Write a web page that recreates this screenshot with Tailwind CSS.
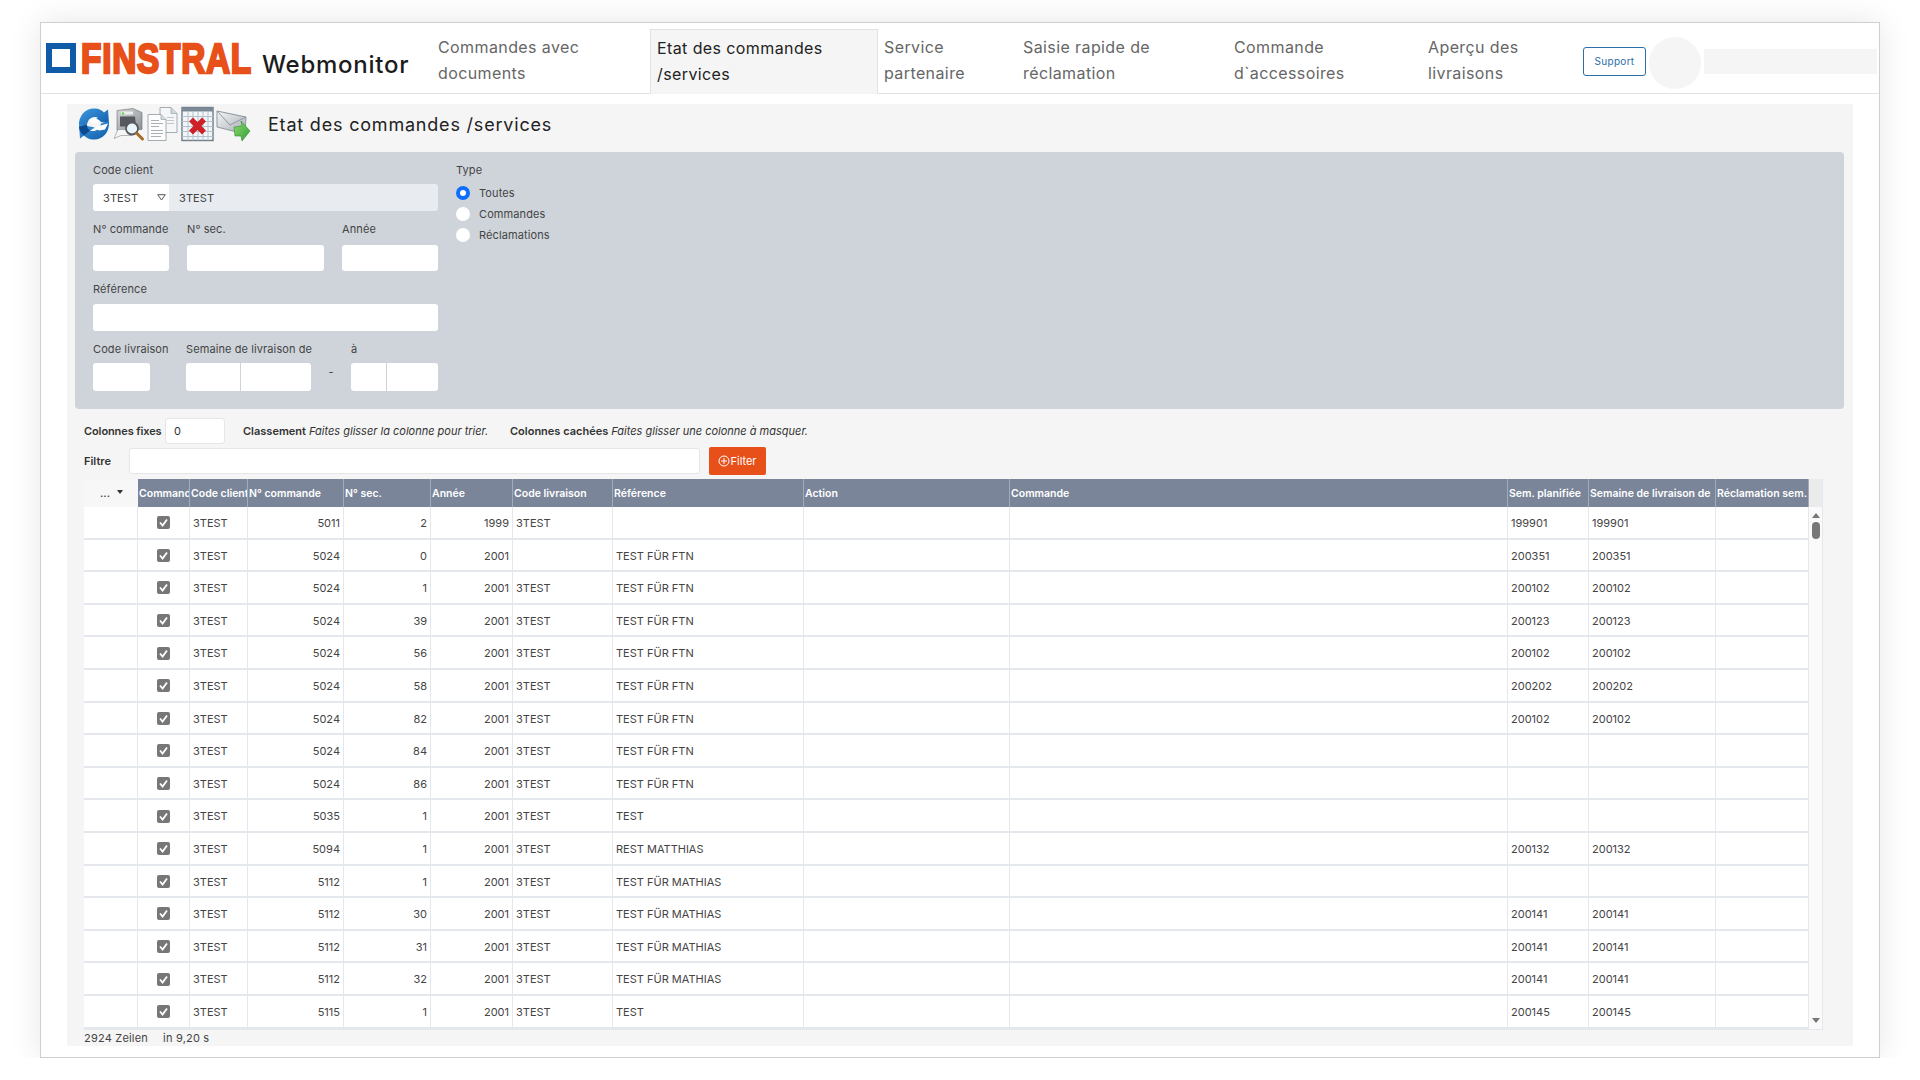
<!DOCTYPE html>
<html lang="fr"><head><meta charset="utf-8"><title>Finstral Webmonitor</title>
<script src="https://cdn.jsdelivr.net/npm/@tailwindcss/browser@4"></script></head>
<body class="bg-white font-['Inter',sans-serif] text-[11px] text-[#444] overflow-hidden">
<div class="pt-[22px] pl-[40px]">
<div class="w-[1840px] h-[1036px] bg-white border border-[#cfcfcf] shadow-[0_0_30px_rgba(0,0,0,0.1)]">
  <!-- nav -->
  <header class="h-[71px] border-b border-[#e2e2e2] flex relative">
    <div class="w-[397px] shrink-0 flex items-start pl-[5px] pt-[19px]">
      <span class="w-[30px] h-[30px] border-[6px] border-[#0f5ba7] shrink-0 mt-[1px]"></span>
      <span class="ml-[5px] w-[170px] h-[32px] overflow-visible shrink-0"><span class="block origin-top-left scale-x-[.775] font-['Liberation_Sans'] font-bold text-[43px] leading-[32px] text-[#e8501a] [-webkit-text-stroke:2.5px_#e8501a] tracking-[1px] whitespace-nowrap">FINSTRAL</span></span>
      <span class="ml-[11px] text-[24px] leading-[30px] font-medium text-[#1c1c1c] mt-[8px] tracking-[.75px]">Webmonitor</span>
    </div>
    <nav class="flex text-[16px] leading-[26px] text-[#666] tracking-[.4px] pt-[11px]">
      <a class="w-[212px]">Commandes avec<br>documents</a>
      <a class="w-[228px] -mt-[5px] h-[65px] pt-[5px] pl-[6px] bg-[#f5f5f5] border border-b-0 border-[#e2e2e2] text-[#222]">Etat des commandes<br>/services</a>
      <a class="w-[145px] pl-[6px]">Service<br>partenaire</a>
      <a class="w-[210px]">Saisie rapide de<br>réclamation</a>
      <a class="w-[195px] pl-[1px]">Commande<br>d`accessoires</a>
      <a class="w-[155px]">Aperçu des<br>livraisons</a>
    </nav>
    <button class="absolute left-[1542px] top-[24px] w-[63px] h-[29px] border border-[#2a6fa8] rounded-[3px] text-[10px] tracking-[.3px] text-[#2a6fa8]">Support</button>
    <span class="absolute left-[1608px] top-[14px] w-[52px] h-[52px] rounded-full bg-[#f5f5f5]"></span>
    <span class="absolute left-[1663px] top-[26px] w-[173px] h-[25px] bg-[#f5f5f5]"></span>
  </header>
  <!-- main -->
  <main class="ml-[26px] mt-[10px] w-[1786px] h-[942px] bg-[#f5f5f5]">
    <div class="h-[48px] flex items-start pl-[11px] pt-[2px]">
      <div class="flex w-[173px] h-[36px] items-center gap-[2px]">
        <svg width="32" height="36" viewBox="0 0 32 35" class="shrink-0"><defs><linearGradient id="b" x1="0" y1="0" x2="1" y2="1"><stop offset="0" stop-color="#3f9be0"/><stop offset="1" stop-color="#0f5aa8"/></linearGradient></defs><path d="M1 20C0 8 9 1 17 2c4 0 7 2 9 4l4-3 1 14-16-3 5-3c-5-2-10 1-11 7z" fill="url(#b)"/><path d="M31 15c1 12-8 19-16 18-4 0-7-2-9-4l-4 3-1-14 16 3-5 3c5 2 10-1 11-7z" fill="url(#b)"/><path d="M1 20l8-2c0 3 1 5 3 6l-6 5c-3-2-5-5-5-9z" fill="#0c4a90"/><path d="M11 13l6-2 6 4-8 2z" fill="#fff"/><path d="M16 21l10-3 4-1-3 6-6 1z" fill="#fff"/></svg>
        <svg width="33" height="36" viewBox="0 0 33 35" class="shrink-0"><defs><linearGradient id="p" x1="0" y1="0" x2="1" y2="1"><stop offset="0" stop-color="#d6d8da"/><stop offset="1" stop-color="#8b8f94"/></linearGradient></defs><path d="M5 4l16-2 9 4v17l-25 1z" fill="url(#p)" stroke="#6a6d71" stroke-width=".6"/><path d="M8 10h15l1 10H8z" fill="#55585d"/><path d="M9 5h12v3H9z" fill="#eceeef"/><circle cx="11" cy="7" r="1.2" fill="#63d14a"/><path d="M6 23h13l1 6H9l-7 3z" fill="#f6f6f6" stroke="#8a8a8a" stroke-width=".6"/><circle cx="20" cy="22" r="6" fill="#eaf5fb" stroke="#55585c" stroke-width="1.8"/><path d="M24.500 26.500l6 6" stroke="#a86a22" stroke-width="3" stroke-linecap="round"/></svg>
        <svg width="32" height="36" viewBox="0 0 32 35" class="shrink-0"><path d="M13 1h11l6 6v19H13z" fill="#f4f6f7" stroke="#8d9aa2" stroke-width=".8"/><path d="M24 1v6h6" fill="#cfd6da" stroke="#8d9aa2" stroke-width=".6"/><path d="M20 11h7M20 14h7M20 17h7" stroke="#c0c6cb"/><path d="M1 8h13l5 5v21H1z" fill="#fcfcfc" stroke="#8d9aa2" stroke-width=".8"/><path d="M14 8v5h5" fill="#d7dcdf" stroke="#8d9aa2" stroke-width=".6"/><path d="M4 14h8M4 17h12M4 20h8M4 24h12M4 27h12M4 30h10" stroke="#a9b0b5"/></svg>
        <svg width="33" height="36" viewBox="0 0 33 35" class="shrink-0"><rect x="1" y="1" width="31" height="33" fill="#f2f6f8" stroke="#6f7c88" stroke-width="1.4"/><rect x="1" y="1" width="31" height="4" fill="#7b8996"/><path d="M7 5v29M12 5v29M17 5v29M22 5v29M27 5v29M1 10h31M1 15h31M1 20h31M1 25h31M1 30h31" stroke="#b3c2cc" stroke-width="1"/><path d="M10 13l13 13M23 13L10 26" stroke="#cf2028" stroke-width="5.500"/></svg>
        <svg width="35" height="36" viewBox="0 0 35 36" class="shrink-0"><defs><linearGradient id="e" x1="0" y1="0" x2="1" y2="1"><stop offset="0" stop-color="#f4f5f6"/><stop offset="1" stop-color="#a6acb2"/></linearGradient><linearGradient id="g" x1="0" y1="0" x2="1" y2="1"><stop offset="0" stop-color="#8fdc6a"/><stop offset="1" stop-color="#2f9e3a"/></linearGradient></defs><path d="M1 5l29 6-1 17-28-7z" fill="url(#e)" stroke="#8f979e"/><path d="M1 5l13 14 16-8" fill="none" stroke="#8f979e"/><path d="M18 21l8-1-1-5 9 10-8 10-1-5-6 0z" fill="url(#g)" stroke="#2f8a30" stroke-width=".6"/></svg>
      </div>
      <h1 class="ml-[17px] text-[18px] leading-[38px] font-normal text-[#222] tracking-[.8px]">Etat des commandes /services</h1>
    </div>
    <!-- filter panel -->
    <section class="ml-[8px] w-[1769px] h-[257px] bg-[#cfd4db] rounded-[4px] flex pl-[18px] pt-[11px] text-[#444] tracking-[.1px]">
      <div class="w-[345px] shrink-0">
        <label class="block h-[14px] leading-[14px]">Code client</label>
        <div class="mt-[7px] h-[27px] flex rounded-[3px] overflow-hidden leading-[28px]">
          <div class="w-[76px] bg-white pl-[10px] relative">3TEST<svg class="absolute right-[3px] top-[10px]" width="9" height="7" viewBox="0 0 9 7"><path d="M.7.7h7.6L4.5 6z" fill="none" stroke="#555"/></svg></div>
          <div class="flex-1 bg-[#e8ebef] pl-[10px]">3TEST</div>
        </div>
        <div class="mt-[11px] flex leading-[14px] h-[14px]"><label class="w-[94px]">N° commande</label><label class="w-[155px]">N° sec.</label><label>Année</label></div>
        <div class="mt-[9px] flex h-[26px]"><span class="w-[76px] bg-white rounded-[3px]"></span><span class="ml-[18px] w-[137px] bg-white rounded-[3px]"></span><span class="ml-[18px] w-[96px] bg-white rounded-[3px]"></span></div>
        <label class="block mt-[11px] h-[14px] leading-[14px]">Référence</label>
        <div class="mt-[8px] h-[27px] bg-white rounded-[3px]"></div>
        <div class="mt-[11px] flex leading-[14px] h-[14px]"><label class="w-[93px]">Code livraison</label><label class="w-[165px]">Semaine de livraison de</label><label>à</label></div>
        <div class="mt-[7px] flex h-[28px]">
          <span class="w-[57px] bg-white rounded-[3px]"></span>
          <span class="ml-[36px] w-[125px] bg-white rounded-[3px] flex"><span class="w-[55px] border-r border-[#cfd4db]"></span></span>
          <span class="w-[40px] text-center leading-[18px]">-</span>
          <span class="w-[87px] bg-white rounded-[3px] flex"><span class="w-[36px] border-r border-[#cfd4db]"></span></span>
        </div>
      </div>
      <div class="ml-[18px]">
        <label class="block h-[14px] leading-[14px]">Type</label>
        <div class="mt-[9px] flex flex-col gap-[7px] leading-[14px]">
          <div class="flex items-center gap-[9px]"><span class="w-[14px] h-[14px] rounded-full bg-white border-[4px] border-[#0d6efd]"></span>Toutes</div>
          <div class="flex items-center gap-[9px]"><span class="w-[14px] h-[14px] rounded-full bg-white"></span>Commandes</div>
          <div class="flex items-center gap-[9px]"><span class="w-[14px] h-[14px] rounded-full bg-white"></span>Réclamations</div>
        </div>
      </div>
    </section>
    <!-- options -->
    <div class="ml-[17px] mt-[9px] h-[26px] flex items-center text-[11px] text-[#333]">
      <b class="font-semibold w-[81px] tracking-[-.1px] whitespace-nowrap">Colonnes fixes</b>
      <span class="w-[60px] h-[26px] bg-white border border-[#e6e6e6] rounded-[3px] pl-[8px] leading-[24px]">0</span>
      <span class="ml-[18px] w-[267px] whitespace-nowrap"><b class="font-semibold">Classement</b> <i>Faites glisser la colonne pour trier.</i></span>
      <span class="whitespace-nowrap"><b class="font-semibold">Colonnes cachées</b> <i>Faites glisser une colonne à masquer.</i></span>
    </div>
    <div class="ml-[17px] mt-[3px] h-[28px] flex items-center text-[11px] text-[#333]">
      <b class="font-semibold w-[45px]">Filtre</b>
      <span class="w-[571px] h-[26px] bg-white border border-[#e6e6e6] rounded-[3px]"></span>
      <button class="ml-[9px] w-[57px] h-[28px] rounded-[2px] bg-[#e8501a] text-white text-[11px] flex items-center justify-center"><svg width="12" height="12" viewBox="0 0 12 12" class="shrink-0"><circle cx="6" cy="6" r="5" fill="none" stroke="#fff"/><path d="M6 3v6M3 6h6" stroke="#fff"/></svg>Filter</button>
    </div>
    <!-- table -->
    <div class="ml-[17px] mt-[3px] w-[1739px] flex border-b border-[#e4e7ec]">
      <div class="w-[1725px] shrink-0 [&>div>div]:px-[3px] [&>div>div]:overflow-hidden [&>div>div]:whitespace-nowrap">
        <div class="grid grid-cols-[54px_52px_58px_96px_87px_82px_100px_191px_206px_498px_81px_127px_93px] h-[28px] mt-[1px] leading-[30px] bg-[#7a8599] text-white font-semibold text-[10.5px] [&>div]:border-r [&>div]:border-[#a3abb8] [&>div]:!px-[1px]">
          <div class="bg-[#f7f7f7] text-[#444] !border-r-0 relative"><span class="ml-[15px]">...</span><span class="absolute left-[33px] top-[11px] border-x-[3px] border-t-[4px] border-x-transparent border-t-[#333]"></span></div>
          <div>Commande</div><div>Code client</div><div>N° commande</div><div>N° sec.</div><div>Année</div><div>Code livraison</div><div>Référence</div><div>Action</div><div>Commande</div><div>Sem. planifiée</div><div>Semaine de livraison de</div><div>Réclamation sem.</div>
        </div>
        <div class="grid grid-cols-[54px_52px_58px_96px_87px_82px_100px_191px_206px_498px_81px_127px_93px] h-[32.6px] leading-[33px] bg-white border-b-2 border-[#e4e7ec] [&>div]:border-r [&>div]:border-[#e4e7ec]"><div></div><div class="flex items-center justify-center pt-[1px]"><svg width="13" height="13" viewBox="0 0 13 13"><rect width="13" height="13" rx="2" fill="#777"/><path d="M3 6.500l2.600 3L10 3.500" fill="none" stroke="#fff" stroke-width="1.800"/></svg></div><div>3TEST</div><div class="text-right">5011</div><div class="text-right">2</div><div class="text-right">1999</div><div>3TEST</div><div></div><div></div><div></div><div>199901</div><div>199901</div><div></div></div>
        <div class="grid grid-cols-[54px_52px_58px_96px_87px_82px_100px_191px_206px_498px_81px_127px_93px] h-[32.6px] leading-[33px] bg-white border-b-2 border-[#e4e7ec] [&>div]:border-r [&>div]:border-[#e4e7ec]"><div></div><div class="flex items-center justify-center pt-[1px]"><svg width="13" height="13" viewBox="0 0 13 13"><rect width="13" height="13" rx="2" fill="#777"/><path d="M3 6.500l2.600 3L10 3.500" fill="none" stroke="#fff" stroke-width="1.800"/></svg></div><div>3TEST</div><div class="text-right">5024</div><div class="text-right">0</div><div class="text-right">2001</div><div></div><div>TEST FÜR FTN</div><div></div><div></div><div>200351</div><div>200351</div><div></div></div>
        <div class="grid grid-cols-[54px_52px_58px_96px_87px_82px_100px_191px_206px_498px_81px_127px_93px] h-[32.6px] leading-[33px] bg-white border-b-2 border-[#e4e7ec] [&>div]:border-r [&>div]:border-[#e4e7ec]"><div></div><div class="flex items-center justify-center pt-[1px]"><svg width="13" height="13" viewBox="0 0 13 13"><rect width="13" height="13" rx="2" fill="#777"/><path d="M3 6.500l2.600 3L10 3.500" fill="none" stroke="#fff" stroke-width="1.800"/></svg></div><div>3TEST</div><div class="text-right">5024</div><div class="text-right">1</div><div class="text-right">2001</div><div>3TEST</div><div>TEST FÜR FTN</div><div></div><div></div><div>200102</div><div>200102</div><div></div></div>
        <div class="grid grid-cols-[54px_52px_58px_96px_87px_82px_100px_191px_206px_498px_81px_127px_93px] h-[32.6px] leading-[33px] bg-white border-b-2 border-[#e4e7ec] [&>div]:border-r [&>div]:border-[#e4e7ec]"><div></div><div class="flex items-center justify-center pt-[1px]"><svg width="13" height="13" viewBox="0 0 13 13"><rect width="13" height="13" rx="2" fill="#777"/><path d="M3 6.500l2.600 3L10 3.500" fill="none" stroke="#fff" stroke-width="1.800"/></svg></div><div>3TEST</div><div class="text-right">5024</div><div class="text-right">39</div><div class="text-right">2001</div><div>3TEST</div><div>TEST FÜR FTN</div><div></div><div></div><div>200123</div><div>200123</div><div></div></div>
        <div class="grid grid-cols-[54px_52px_58px_96px_87px_82px_100px_191px_206px_498px_81px_127px_93px] h-[32.6px] leading-[33px] bg-white border-b-2 border-[#e4e7ec] [&>div]:border-r [&>div]:border-[#e4e7ec]"><div></div><div class="flex items-center justify-center pt-[1px]"><svg width="13" height="13" viewBox="0 0 13 13"><rect width="13" height="13" rx="2" fill="#777"/><path d="M3 6.500l2.600 3L10 3.500" fill="none" stroke="#fff" stroke-width="1.800"/></svg></div><div>3TEST</div><div class="text-right">5024</div><div class="text-right">56</div><div class="text-right">2001</div><div>3TEST</div><div>TEST FÜR FTN</div><div></div><div></div><div>200102</div><div>200102</div><div></div></div>
        <div class="grid grid-cols-[54px_52px_58px_96px_87px_82px_100px_191px_206px_498px_81px_127px_93px] h-[32.6px] leading-[33px] bg-white border-b-2 border-[#e4e7ec] [&>div]:border-r [&>div]:border-[#e4e7ec]"><div></div><div class="flex items-center justify-center pt-[1px]"><svg width="13" height="13" viewBox="0 0 13 13"><rect width="13" height="13" rx="2" fill="#777"/><path d="M3 6.500l2.600 3L10 3.500" fill="none" stroke="#fff" stroke-width="1.800"/></svg></div><div>3TEST</div><div class="text-right">5024</div><div class="text-right">58</div><div class="text-right">2001</div><div>3TEST</div><div>TEST FÜR FTN</div><div></div><div></div><div>200202</div><div>200202</div><div></div></div>
        <div class="grid grid-cols-[54px_52px_58px_96px_87px_82px_100px_191px_206px_498px_81px_127px_93px] h-[32.6px] leading-[33px] bg-white border-b-2 border-[#e4e7ec] [&>div]:border-r [&>div]:border-[#e4e7ec]"><div></div><div class="flex items-center justify-center pt-[1px]"><svg width="13" height="13" viewBox="0 0 13 13"><rect width="13" height="13" rx="2" fill="#777"/><path d="M3 6.500l2.600 3L10 3.500" fill="none" stroke="#fff" stroke-width="1.800"/></svg></div><div>3TEST</div><div class="text-right">5024</div><div class="text-right">82</div><div class="text-right">2001</div><div>3TEST</div><div>TEST FÜR FTN</div><div></div><div></div><div>200102</div><div>200102</div><div></div></div>
        <div class="grid grid-cols-[54px_52px_58px_96px_87px_82px_100px_191px_206px_498px_81px_127px_93px] h-[32.6px] leading-[33px] bg-white border-b-2 border-[#e4e7ec] [&>div]:border-r [&>div]:border-[#e4e7ec]"><div></div><div class="flex items-center justify-center pt-[1px]"><svg width="13" height="13" viewBox="0 0 13 13"><rect width="13" height="13" rx="2" fill="#777"/><path d="M3 6.500l2.600 3L10 3.500" fill="none" stroke="#fff" stroke-width="1.800"/></svg></div><div>3TEST</div><div class="text-right">5024</div><div class="text-right">84</div><div class="text-right">2001</div><div>3TEST</div><div>TEST FÜR FTN</div><div></div><div></div><div></div><div></div><div></div></div>
        <div class="grid grid-cols-[54px_52px_58px_96px_87px_82px_100px_191px_206px_498px_81px_127px_93px] h-[32.6px] leading-[33px] bg-white border-b-2 border-[#e4e7ec] [&>div]:border-r [&>div]:border-[#e4e7ec]"><div></div><div class="flex items-center justify-center pt-[1px]"><svg width="13" height="13" viewBox="0 0 13 13"><rect width="13" height="13" rx="2" fill="#777"/><path d="M3 6.500l2.600 3L10 3.500" fill="none" stroke="#fff" stroke-width="1.800"/></svg></div><div>3TEST</div><div class="text-right">5024</div><div class="text-right">86</div><div class="text-right">2001</div><div>3TEST</div><div>TEST FÜR FTN</div><div></div><div></div><div></div><div></div><div></div></div>
        <div class="grid grid-cols-[54px_52px_58px_96px_87px_82px_100px_191px_206px_498px_81px_127px_93px] h-[32.6px] leading-[33px] bg-white border-b-2 border-[#e4e7ec] [&>div]:border-r [&>div]:border-[#e4e7ec]"><div></div><div class="flex items-center justify-center pt-[1px]"><svg width="13" height="13" viewBox="0 0 13 13"><rect width="13" height="13" rx="2" fill="#777"/><path d="M3 6.500l2.600 3L10 3.500" fill="none" stroke="#fff" stroke-width="1.800"/></svg></div><div>3TEST</div><div class="text-right">5035</div><div class="text-right">1</div><div class="text-right">2001</div><div>3TEST</div><div>TEST</div><div></div><div></div><div></div><div></div><div></div></div>
        <div class="grid grid-cols-[54px_52px_58px_96px_87px_82px_100px_191px_206px_498px_81px_127px_93px] h-[32.6px] leading-[33px] bg-white border-b-2 border-[#e4e7ec] [&>div]:border-r [&>div]:border-[#e4e7ec]"><div></div><div class="flex items-center justify-center pt-[1px]"><svg width="13" height="13" viewBox="0 0 13 13"><rect width="13" height="13" rx="2" fill="#777"/><path d="M3 6.500l2.600 3L10 3.500" fill="none" stroke="#fff" stroke-width="1.800"/></svg></div><div>3TEST</div><div class="text-right">5094</div><div class="text-right">1</div><div class="text-right">2001</div><div>3TEST</div><div>REST MATTHIAS</div><div></div><div></div><div>200132</div><div>200132</div><div></div></div>
        <div class="grid grid-cols-[54px_52px_58px_96px_87px_82px_100px_191px_206px_498px_81px_127px_93px] h-[32.6px] leading-[33px] bg-white border-b-2 border-[#e4e7ec] [&>div]:border-r [&>div]:border-[#e4e7ec]"><div></div><div class="flex items-center justify-center pt-[1px]"><svg width="13" height="13" viewBox="0 0 13 13"><rect width="13" height="13" rx="2" fill="#777"/><path d="M3 6.500l2.600 3L10 3.500" fill="none" stroke="#fff" stroke-width="1.800"/></svg></div><div>3TEST</div><div class="text-right">5112</div><div class="text-right">1</div><div class="text-right">2001</div><div>3TEST</div><div>TEST FÜR MATHIAS</div><div></div><div></div><div></div><div></div><div></div></div>
        <div class="grid grid-cols-[54px_52px_58px_96px_87px_82px_100px_191px_206px_498px_81px_127px_93px] h-[32.6px] leading-[33px] bg-white border-b-2 border-[#e4e7ec] [&>div]:border-r [&>div]:border-[#e4e7ec]"><div></div><div class="flex items-center justify-center pt-[1px]"><svg width="13" height="13" viewBox="0 0 13 13"><rect width="13" height="13" rx="2" fill="#777"/><path d="M3 6.500l2.600 3L10 3.500" fill="none" stroke="#fff" stroke-width="1.800"/></svg></div><div>3TEST</div><div class="text-right">5112</div><div class="text-right">30</div><div class="text-right">2001</div><div>3TEST</div><div>TEST FÜR MATHIAS</div><div></div><div></div><div>200141</div><div>200141</div><div></div></div>
        <div class="grid grid-cols-[54px_52px_58px_96px_87px_82px_100px_191px_206px_498px_81px_127px_93px] h-[32.6px] leading-[33px] bg-white border-b-2 border-[#e4e7ec] [&>div]:border-r [&>div]:border-[#e4e7ec]"><div></div><div class="flex items-center justify-center pt-[1px]"><svg width="13" height="13" viewBox="0 0 13 13"><rect width="13" height="13" rx="2" fill="#777"/><path d="M3 6.500l2.600 3L10 3.500" fill="none" stroke="#fff" stroke-width="1.800"/></svg></div><div>3TEST</div><div class="text-right">5112</div><div class="text-right">31</div><div class="text-right">2001</div><div>3TEST</div><div>TEST FÜR MATHIAS</div><div></div><div></div><div>200141</div><div>200141</div><div></div></div>
        <div class="grid grid-cols-[54px_52px_58px_96px_87px_82px_100px_191px_206px_498px_81px_127px_93px] h-[32.6px] leading-[33px] bg-white border-b-2 border-[#e4e7ec] [&>div]:border-r [&>div]:border-[#e4e7ec]"><div></div><div class="flex items-center justify-center pt-[1px]"><svg width="13" height="13" viewBox="0 0 13 13"><rect width="13" height="13" rx="2" fill="#777"/><path d="M3 6.500l2.600 3L10 3.500" fill="none" stroke="#fff" stroke-width="1.800"/></svg></div><div>3TEST</div><div class="text-right">5112</div><div class="text-right">32</div><div class="text-right">2001</div><div>3TEST</div><div>TEST FÜR MATHIAS</div><div></div><div></div><div>200141</div><div>200141</div><div></div></div>
        <div class="grid grid-cols-[54px_52px_58px_96px_87px_82px_100px_191px_206px_498px_81px_127px_93px] h-[32.6px] leading-[33px] bg-white border-b-2 border-[#e4e7ec] [&>div]:border-r [&>div]:border-[#e4e7ec]"><div></div><div class="flex items-center justify-center pt-[1px]"><svg width="13" height="13" viewBox="0 0 13 13"><rect width="13" height="13" rx="2" fill="#777"/><path d="M3 6.500l2.600 3L10 3.500" fill="none" stroke="#fff" stroke-width="1.800"/></svg></div><div>3TEST</div><div class="text-right">5115</div><div class="text-right">1</div><div class="text-right">2001</div><div>3TEST</div><div>TEST</div><div></div><div></div><div>200145</div><div>200145</div><div></div></div>
      </div>
      <div class="w-[14px] shrink-0 mt-[1px] bg-[#fafafa] border-r border-[#e4e7ec] flex flex-col items-center pb-[6px]">
        <div class="w-full h-[28px] bg-[#ebebeb] shrink-0"></div>
        <span class="mt-[6px] border-x-[4px] border-b-[5px] border-x-transparent border-b-[#777]"></span>
        <span class="mt-[4px] w-[8px] h-[17px] rounded-[4px] bg-[#777]"></span>
        <span class="mt-auto border-x-[4px] border-t-[5px] border-x-transparent border-t-[#777]"></span>
      </div>
    </div>
    <div class="ml-[17px] mt-[1px] text-[11px] tracking-[.2px] leading-[14px] text-[#444] flex gap-[15px]"><span>2924 Zeilen</span><span>in 9,20 s</span></div>
  </main>
</div>
</div>
</body></html>
